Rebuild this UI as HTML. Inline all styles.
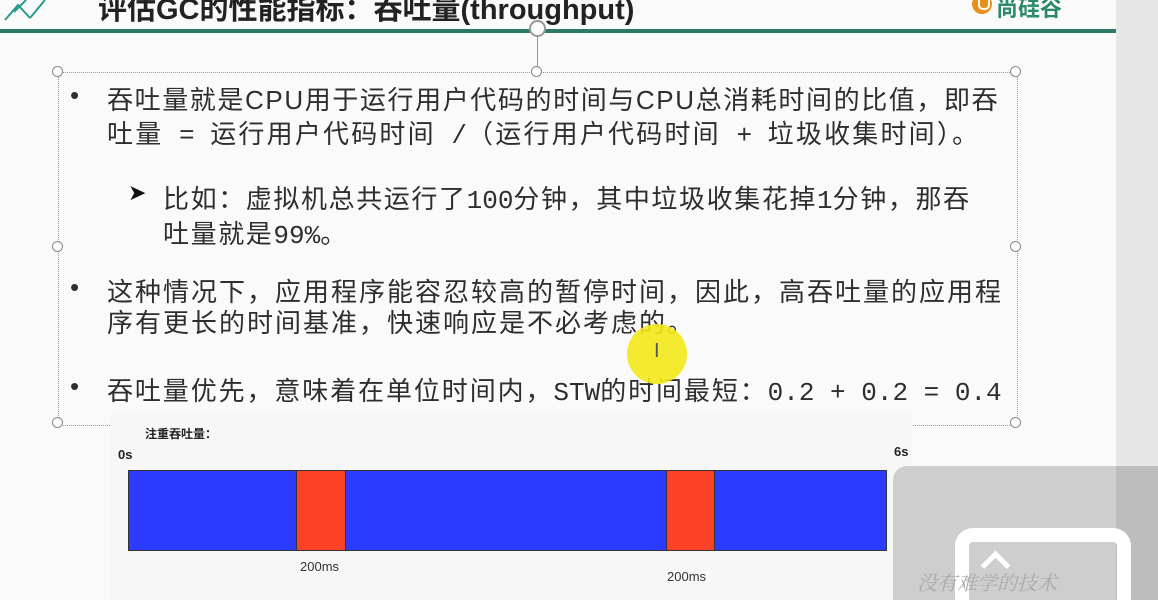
<!DOCTYPE html>
<html><head><meta charset="utf-8"><style>
html,body{margin:0;width:1158px;height:600px;overflow:hidden;}
body{background:#fafafa;position:relative;font-family:"Liberation Sans","Noto Sans CJK SC",sans-serif;}
.a{position:absolute;white-space:nowrap;}
.t{font-size:26px;color:#2e2e2e;letter-spacing:1.6px;}
.m{font-family:"Liberation Mono","Noto Sans CJK SC",monospace;letter-spacing:0;}
.h{position:absolute;width:9px;height:9px;border:1.5px solid #888;border-radius:50%;background:#fff;}
</style></head><body>
<div class="a" style="left:98px;top:-14px;font-size:29px;font-weight:bold;color:#222">评估GC的性能指标：吞吐量(throughput)</div>
<svg class="a" style="left:0;top:0" width="60" height="32"><path d="M5 20 L18 5 L30 18 M14 12 L26 0 M30 18 L45 0" stroke="#2a9a8a" stroke-width="2" fill="none"/></svg>
<div class="a" style="left:972px;top:-6px;width:20px;height:20px;border-radius:50%;background:#e8901a"></div>
<div class="a" style="left:978px;top:-4px;width:8px;height:12px;border-radius:0 0 5px 5px;border:2px solid #fff;border-top:none"></div>
<div class="a" style="left:996px;top:-9px;font-size:22px;font-weight:bold;color:#2a8a6a">尚硅谷</div>
<div class="a" style="left:0;top:29px;width:1116px;height:4px;background:#2b7a66"></div>
<div class="a" style="left:1116px;top:0;width:42px;height:600px;background:#e6e6e6"></div>
<div class="a" style="left:537px;top:33px;width:1px;height:38px;background:#999"></div>
<div class="a" style="left:529px;top:20px;width:13px;height:13px;border:2px solid #999;border-radius:50%;background:#fafafa"></div>
<div class="a" style="left:58px;top:72px;width:958px;height:352px;border:1px dotted #999"></div>
<div class="h" style="left:52px;top:66px"></div><div class="h" style="left:531px;top:66px"></div><div class="h" style="left:1010px;top:66px"></div>
<div class="h" style="left:52px;top:241px"></div><div class="h" style="left:1010px;top:241px"></div>
<div class="h" style="left:52px;top:417px"></div><div class="h" style="left:531px;top:417px"></div><div class="h" style="left:1010px;top:417px"></div>
<div class="a t" style="left:70px;top:80px">•</div>
<div class="a t" style="left:107px;top:80px">吞吐量就是CPU用于运行用户代码的时间与CPU总消耗时间的比值，即吞</div>
<div class="a t" style="left:107px;top:114px;letter-spacing:2.2px">吐量<span class="m">&nbsp;=&nbsp;</span>运行用户代码时间<span class="m">&nbsp;/</span>（运行用户代码时间<span class="m">&nbsp;+&nbsp;</span>垃圾收集时间）。</div>
<div class="a t" style="left:128px;top:180px;font-size:22px;color:#111">➤</div>
<div class="a t" style="left:163px;top:179px">比如：虚拟机总共运行了<span class="m">100</span>分钟，其中垃圾收集花掉<span class="m">1</span>分钟，那吞</div>
<div class="a t" style="left:163px;top:214px">吐量就是<span class="m">99%</span>。</div>
<div class="a t" style="left:70px;top:272px">•</div>
<div class="a t" style="left:107px;top:272px;letter-spacing:2px">这种情况下，应用程序能容忍较高的暂停时间，因此，高吞吐量的应用程</div>
<div class="a t" style="left:107px;top:303px;letter-spacing:2px">序有更长的时间基准，快速响应是不必考虑的。</div>
<div class="a t" style="left:70px;top:371px">•</div>
<div class="a t" style="left:107px;top:371px;letter-spacing:1.9px">吞吐量优先，意味着在单位时间内，<span class="m">STW</span>的时间最短：<span class="m">0.2 + 0.2 = 0.4</span></div>
<div class="a" style="left:627px;top:324px;width:60px;height:60px;border-radius:50%;background:#f3e81a;opacity:.9"></div>
<div class="a" style="left:654px;top:340px;font-size:20px;color:#555">I</div>
<div class="a" style="left:110px;top:412px;width:802px;height:188px;background:#f7f7f7"></div>
<div class="a" style="left:145px;top:425px;font-size:12px;font-weight:bold;color:#222">注重吞吐量：</div>
<div class="a" style="left:118px;top:447px;font-size:13px;font-weight:bold;color:#222">0s</div>
<div class="a" style="left:894px;top:444px;font-size:13px;font-weight:bold;color:#222">6s</div>
<div class="a" style="left:128px;top:470px;width:757px;height:79px;background:#2b3bff;border:1.5px solid #333"></div>
<div class="a" style="left:296px;top:470px;width:48px;height:79px;background:#fc4226;border:1.5px solid #333"></div>
<div class="a" style="left:666px;top:470px;width:47px;height:79px;background:#fc4226;border:1.5px solid #333"></div>
<div class="a" style="left:300px;top:559px;font-size:13px;color:#333">200ms</div>
<div class="a" style="left:667px;top:569px;font-size:13px;color:#333">200ms</div>
<div class="a" style="left:893px;top:466px;width:265px;height:140px;background:#cdcecd;border-radius:14px 0 0 0"></div>
<div class="a" style="left:1116px;top:466px;width:42px;height:134px;background:#bdbdbd"></div>
<div class="a" style="left:955px;top:528px;width:176px;height:90px;border:14px solid #fff;border-radius:18px;box-sizing:border-box"></div>
<div class="a" style="left:985px;top:555px;width:16px;height:16px;border-left:5px solid #fff;border-top:5px solid #fff;transform:rotate(45deg)"></div>
<div class="a" style="left:917px;top:567px;font-size:20px;color:#aaa;font-style:italic;font-family:'Noto Serif CJK SC',serif">没有难学的技术</div>
</body></html>
